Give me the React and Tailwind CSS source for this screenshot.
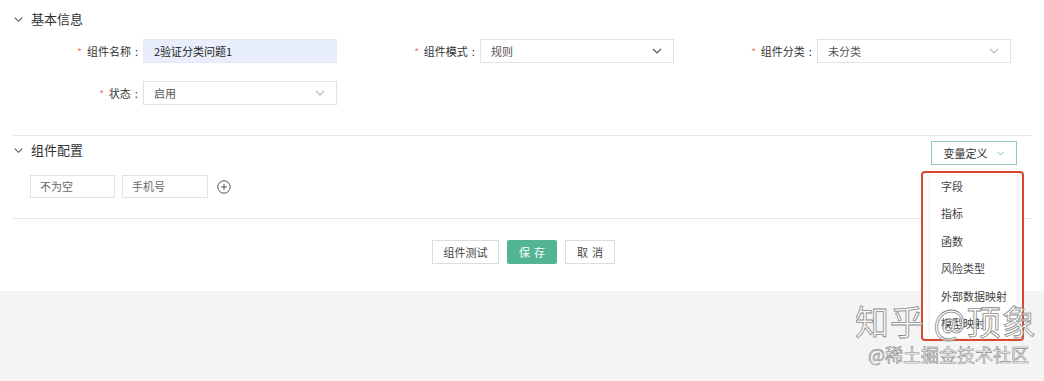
import React from 'react';

const font = { fontFamily: '"Noto Sans CJK SC", "Noto Sans", sans-serif' };

function Chevron({ className = '' }) {
  return (
    <svg className={className} viewBox="0 0 12 12" fill="none" stroke="currentColor" strokeWidth="1.2">
      <path d="M2 4l4 4 4-4" />
    </svg>
  );
}

function Label({ text }) {
  return (
    <div className="w-[146px] pr-[5px] flex justify-end items-center text-[11px] text-[#333]">
      <span className="text-[#e8765a] mr-[5px] text-[10px]">*</span>
      <span>{text}</span>
      <span className="ml-[4px]">:</span>
    </div>
  );
}

function Select({ value, chevronDark }) {
  return (
    <div className="w-[198px] h-[24px] border border-[#e2e2e2] bg-white flex items-center justify-between pl-[10px] pr-[10px] text-[11px] text-[#555]">
      <span>{value}</span>
      <Chevron className={`w-[12px] h-[12px] ${chevronDark ? 'text-[#555]' : 'text-[#bbb]'}`} />
    </div>
  );
}

function Field({ label, children }) {
  return (
    <div className="w-[337px] flex items-center">
      <Label text={label} />
      {children}
    </div>
  );
}

function SectionHead({ title }) {
  return (
    <div className="flex items-center h-[20px] pl-[13px] text-[13px] text-[#333]">
      <Chevron className="w-[11px] h-[11px] text-[#555] mr-[7px]" />
      <span>{title}</span>
    </div>
  );
}

export default function App() {
  const menu = ['字段', '指标', '函数', '风险类型', '外部数据映射', '模型映射'];
  return (
    <div className="relative w-[1044px] h-[381px] overflow-hidden bg-[#f4f4f4]" style={font}>
      <div className="bg-white h-[291px] flex flex-col">
        <div className="pt-[9px]">
          <SectionHead title="基本信息" />
        </div>
        <div className="flex mt-[10px]">
          <Field label="组件名称">
            <div className="w-[198px] h-[24px] bg-[#e8eefb] border border-[#e4e9f5] flex items-center pl-[10px] text-[11px] text-[#222]">
              2验证分类问题1
            </div>
          </Field>
          <Field label="组件模式">
            <Select value="规则" chevronDark />
          </Field>
          <Field label="组件分类">
            <Select value="未分类" />
          </Field>
        </div>
        <div className="flex mt-[18px]">
          <Field label="状态">
            <Select value="启用" />
          </Field>
        </div>

        <div className="mx-[13px] mt-[30px] border-t border-[#e6e6e6]" />

        <div className="flex items-center justify-between mt-[5px] pr-[27px]">
          <div className="-mt-[6px]">
            <SectionHead title="组件配置" />
          </div>
          <div className="w-[86px] h-[24px] border border-[#8fcbb8] flex items-center justify-center gap-[8px] text-[11px] text-[#333]">
            <span>变量定义</span>
            <Chevron className="w-[9px] h-[9px] text-[#6bbfa5]" />
          </div>
        </div>

        <div className="flex items-center mt-[10px] pl-[30px] gap-[7px]">
          <div className="w-[85px] h-[23px] border border-[#e2e2e2] flex items-center pl-[9px] text-[11px] text-[#666]">不为空</div>
          <div className="w-[86px] h-[23px] border border-[#e2e2e2] flex items-center pl-[9px] text-[11px] text-[#666]">手机号</div>
          <svg className="w-[14px] h-[14px] ml-[2px] text-[#555]" viewBox="0 0 14 14" fill="none" stroke="currentColor" strokeWidth="1">
            <circle cx="7" cy="7" r="6.2" />
            <path d="M7 4v6M4 7h6" />
          </svg>
        </div>

        <div className="mx-[13px] mt-[20px] border-t border-[#e6e6e6]" />

        <div className="flex justify-center gap-[8px] mt-[21px] pl-[3px]">
          <div className="w-[67px] h-[24px] border border-[#ddd] bg-white flex items-center justify-center text-[11px] text-[#444]">组件测试</div>
          <div className="w-[50px] h-[24px] bg-[#52b493] rounded-[2px] flex items-center justify-center text-[11px] text-white tracking-[4px] pl-[4px]">保存</div>
          <div className="w-[50px] h-[24px] border border-[#ddd] bg-white flex items-center justify-center text-[11px] text-[#444] tracking-[4px] pl-[4px]">取消</div>
        </div>
      </div>

      {/* dropdown menu with red annotation frame */}
      <div className="absolute left-[921px] top-[171px] w-[103px] h-[170px] border-2 border-[#d9472f] rounded-[4px] overflow-hidden bg-white">
        <div className="ml-[7px] w-[87px] h-full bg-white shadow-[0_0_4px_rgba(0,0,0,0.12)] -mt-[1px]">
          {menu.map((m) => (
            <div key={m} className="h-[27.5px] flex items-center pl-[11px] text-[11px] text-[#444]">{m}</div>
          ))}
        </div>
      </div>

      {/* watermark */}
      <div className="absolute left-[855px] top-[304px] text-[34px] leading-none text-white/70 [-webkit-text-stroke:0.8px_#8a8a8a] tracking-[1px]">
        知乎 @顶象
      </div>
      <div className="absolute left-[868px] top-[345px] text-[18px] leading-none text-white/70 [-webkit-text-stroke:0.6px_#8a8a8a]">
        @稀土掘金技术社区
      </div>
    </div>
  );
}
